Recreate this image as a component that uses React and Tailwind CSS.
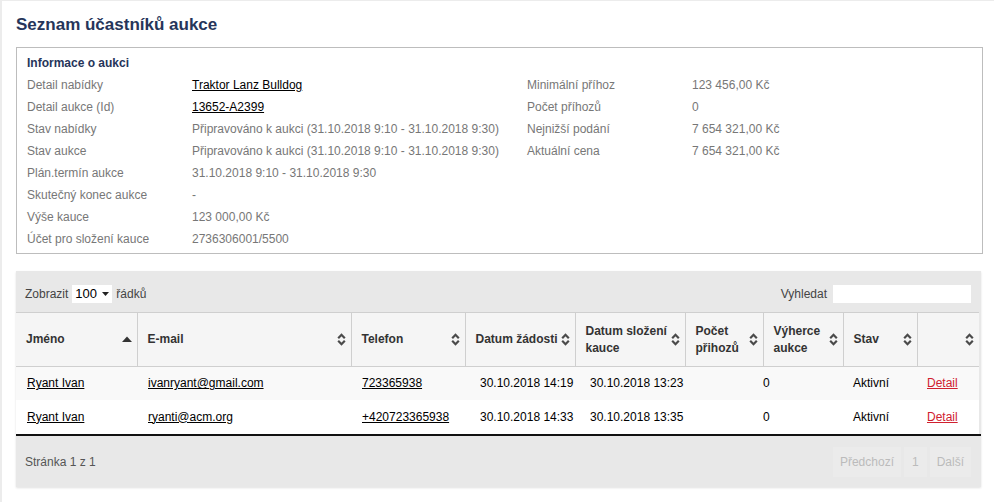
import React from "react"

const info = [
  ["Detail nabídky", "Traktor Lanz Bulldog", true],
  ["Detail aukce (Id)", "13652-A2399", true],
  ["Stav nabídky", "Připravováno k aukci (31.10.2018 9:10 - 31.10.2018 9:30)"],
  ["Stav aukce", "Připravováno k aukci (31.10.2018 9:10 - 31.10.2018 9:30)"],
  ["Plán.termín aukce", "31.10.2018 9:10 - 31.10.2018 9:30"],
  ["Skutečný konec aukce", "-"],
  ["Výše kauce", "123 000,00 Kč"],
  ["Účet pro složení kauce", "2736306001/5500"],
]

const info2 = [
  ["Minimální příhoz", "123 456,00 Kč"],
  ["Počet příhozů", "0"],
  ["Nejnižší podání", "7 654 321,00 Kč"],
  ["Aktuální cena", "7 654 321,00 Kč"],
]

const rows = [
  {
    name: "Ryant Ivan",
    email: "ivanryant@gmail.com",
    phone: "723365938",
    req: "30.10.2018 14:19",
    dep: "30.10.2018 13:23",
    bids: "0",
    state: "Aktivní",
  },
  {
    name: "Ryant Ivan",
    email: "ryanti@acm.org",
    phone: "+420723365938",
    req: "30.10.2018 14:33",
    dep: "30.10.2018 13:35",
    bids: "0",
    state: "Aktivní",
  },
]

const SortBoth = () => (
  <svg width="9" height="13" viewBox="0 0 9 13" className="shrink-0">
    <path d="M1.2 5.2 L4.5 1.8 L7.8 5.2" fill="none" stroke="#4a4a4a" strokeWidth="2.2" />
    <path d="M1.2 7.8 L4.5 11.2 L7.8 7.8" fill="none" stroke="#4a4a4a" strokeWidth="2.2" />
  </svg>
)

const SortUp = () => (
  <svg width="10" height="7" viewBox="0 0 10 7" className="shrink-0">
    <path d="M0 6 L5 0.5 L10 6 Z" fill="#333" />
  </svg>
)

const Th = ({ children, first, up }) => (
  <th
    className={`h-[54px] px-0 text-left align-middle font-bold text-[12px] leading-[17px] text-[#333] ${
      first ? "" : "border-l border-[#cfcfcf]"
    }`}
  >
    <div className="flex items-center justify-between pl-[10px] pr-[5px]">
      <span>{children}</span>
      {up ? <SortUp /> : <SortBoth />}
    </div>
  </th>
)

export default function App() {
  return (
    <div
      className="w-[994px] min-h-[502px] bg-white border-t border-l-2 border-[#ececec] text-[12px]"
      style={{ fontFamily: '"Liberation Sans", Arial, sans-serif' }}
    >
      <div className="pl-[14px] pr-[11px] pt-[14px]">
        {/* Title */}
        <h1 className="text-[17px] leading-[20px] font-bold text-[#26355a]">Seznam účastníků aukce</h1>

        {/* Info box */}
        <div className="mt-[12px] border border-[#bdbdbd] pl-[10px] pt-[8px] pb-[3px]">
          <div className="font-bold text-[#26355a] leading-[14px]">Informace o aukci</div>
          <div className="mt-[4px] grid grid-cols-[500px_1fr]">
            <div className="grid grid-cols-[165px_1fr]">
              {info.map(([k, v, link]) => (
                <React.Fragment key={k}>
                  <div className="leading-[22px] text-[#777]">{k}</div>
                  <div className={`leading-[22px] ${link ? "text-black underline" : "text-[#777]"}`}>{v}</div>
                </React.Fragment>
              ))}
            </div>
            <div className="grid grid-cols-[165px_1fr] content-start">
              {info2.map(([k, v]) => (
                <React.Fragment key={k}>
                  <div className="leading-[22px] text-[#777]">{k}</div>
                  <div className="leading-[22px] text-[#777]">{v}</div>
                </React.Fragment>
              ))}
            </div>
          </div>
        </div>

        {/* Table */}
        <div className="mt-[17px] mr-[2px] bg-[#e8e8e8] shadow-[0_1px_2px_rgba(0,0,0,0.12)]">
          <div className="h-[41px] flex items-center justify-between pl-[9px] pr-[10px] pt-[4px] text-[#444]">
            <div className="flex items-center gap-[4px]">
              <span>Zobrazit</span>
              <div className="w-[40px] h-[18px] bg-white flex items-center justify-between px-[3px] text-[13px] text-black">
                <span>100</span>
                <svg width="7" height="4" viewBox="0 0 7 4">
                  <path d="M0 0 L7 0 L3.5 4 Z" fill="#222" />
                </svg>
              </div>
              <span>řádků</span>
            </div>
            <div className="flex items-center gap-[6px]">
              <span>Vyhledat</span>
              <div className="w-[138px] h-[18px] bg-white" />
            </div>
          </div>

          <table className="w-[963px] table-fixed border-collapse">
            <colgroup>
              <col className="w-[121px]" />
              <col className="w-[214px]" />
              <col className="w-[114px]" />
              <col className="w-[110px]" />
              <col className="w-[110px]" />
              <col className="w-[78px]" />
              <col className="w-[80px]" />
              <col className="w-[74px]" />
              <col className="w-[62px]" />
            </colgroup>
            <thead>
              <tr className="bg-[#f5f5f5] border-y border-[#cfcfcf]">
                <Th first up>Jméno</Th>
                <Th>E-mail</Th>
                <Th>Telefon</Th>
                <Th>Datum žádosti</Th>
                <Th>
                  Datum složení
                  <br />
                  kauce
                </Th>
                <Th>
                  Počet
                  <br />
                  přihozů
                </Th>
                <Th>
                  Výherce
                  <br />
                  aukce
                </Th>
                <Th>Stav</Th>
                <Th></Th>
              </tr>
            </thead>
            <tbody className="text-black">
              {rows.map((r, i) => (
                <tr key={i} className={`${i === 0 ? "bg-[#f9f9f9] h-[33px]" : "bg-white h-[34px]"}`}>
                  <td className="pl-[11px]">
                    <a className="underline">{r.name}</a>
                  </td>
                  <td className="pl-[11px]">
                    <a className="underline">{r.email}</a>
                  </td>
                  <td className="pl-[11px]">
                    <a className="underline">{r.phone}</a>
                  </td>
                  <td className="pl-[15px] whitespace-nowrap overflow-visible">{r.req}</td>
                  <td className="pl-[15px] whitespace-nowrap overflow-visible">{r.dep}</td>
                  <td></td>
                  <td className="pr-[84px] text-right whitespace-nowrap">{r.bids}</td>
                  <td className="pl-[10px]">{r.state}</td>
                  <td className="pl-[10px]">
                    <a className="underline text-[#d0202f]">Detail</a>
                  </td>
                </tr>
              ))}
            </tbody>
          </table>

          <div className="h-[53px] border-t-2 border-[#111] flex items-center justify-between pl-[9px] pr-[10px] pt-[2px]">
            <span className="text-[#555]">Stránka 1 z 1</span>
            <div className="flex items-center gap-[3px] text-[#bbb]">
              <span className="h-[30px] px-[7px] flex items-center bg-[#ebebeb]">Předchozí</span>
              <span className="h-[30px] px-[8px] flex items-center bg-[#ebebeb]">1</span>
              <span className="h-[30px] px-[7px] flex items-center bg-[#ebebeb]">Další</span>
            </div>
          </div>
        </div>
      </div>
    </div>
  )
}
